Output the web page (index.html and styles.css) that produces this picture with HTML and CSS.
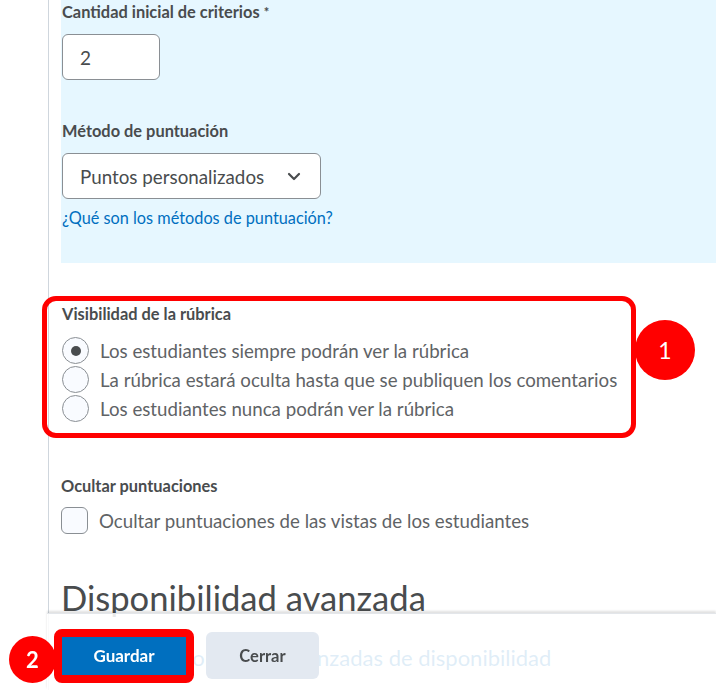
FILE: index.html
```html
<!DOCTYPE html>
<html lang="es">
<head>
    <meta charset="UTF-8">
    <meta name="viewport" content="width=device-width, initial-scale=1.0">
    <title>Nueva rúbrica</title>
    <link rel="stylesheet" href="styles.css">
</head>
<body>

    <div id="page">
        <div class="panel">
            <label class="field-label" for="criteria">Cantidad inicial de criterios <span class="req">*</span></label>
            <input type="text" id="criteria" class="num-input" value="2">

            <label class="field-label label-gap" for="scoring">Método de puntuación</label>
            <div class="select-box" id="scoring">
                <span>Puntos personalizados</span>
                <svg width="14" height="10" viewBox="0 0 14 10"><path d="M2 3 L7 8 L12 3" fill="none" stroke="#494c4e" stroke-width="2.2" stroke-linecap="round" stroke-linejoin="round"/></svg>
            </div>
            <a class="help-link" href="#">¿Qué son los métodos de puntuación?</a>
        </div>

        <div class="highlight">
            <div class="field-label">Visibilidad de la rúbrica</div>
            <div class="radio-list">
                <div class="radio-row"><span class="radio checked"></span>Los estudiantes siempre podrán ver la rúbrica</div>
                <div class="radio-row"><span class="radio"></span>La rúbrica estará oculta hasta que se publiquen los comentarios</div>
                <div class="radio-row"><span class="radio"></span>Los estudiantes nunca podrán ver la rúbrica</div>
            </div>
            <div class="step step-one">1</div>
        </div>

        <div class="field-label hide-label">Ocultar puntuaciones</div>
        <div class="check-row"><span class="checkbox"></span>Ocultar puntuaciones de las vistas de los estudiantes</div>

        <h1>Disponibilidad avanzada</h1>
        <a class="adv-link" href="#">Mostrar las opciones avanzadas de disponibilidad</a>
    </div>

    <div id="footer">
        <div class="save-ring">
            <button class="btn-primary">Guardar</button>
            <div class="step step-two">2</div>
        </div>
        <button class="btn-secondary">Cerrar</button>
    </div>

</body>
</html>
```

FILE: styles.css
```css
body {
    font-family: Lato, "Open Sans", sans-serif;
    background-color: #fff;
    margin: 0;
    color: #5f6366;
    height: 690px;
    overflow: hidden;
}
#page {
    margin-left: 48px;
    border-left: 1px solid #cfd6dd;
    padding-left: 12px;
    height: 690px;
    box-sizing: border-box;
}
.panel {
    background-color: #e6f7ff;
    padding: 1px 0 0 1px;
    height: 263px;
    box-sizing: border-box;
}
.field-label {
    display: block;
    font-size: 16.4px;
    font-weight: bold;
    color: #494c4e;
    line-height: 22px;
}
.req {
    font-size: 13px;
    vertical-align: top;
}
.label-gap {
    margin-top: 40px;
}
.num-input {
    display: block;
    margin-top: 11px;
    width: 98px;
    height: 46px;
    box-sizing: border-box;
    border: 1px solid #8a8f94;
    border-radius: 6px;
    padding: 0 17px;
    font-family: inherit;
    font-size: 19px;
    color: #494c4e;
    background-color: #fff;
}
.select-box {
    margin-top: 11px;
    width: 259px;
    height: 46px;
    box-sizing: border-box;
    border: 1px solid #8a8f94;
    border-radius: 6px;
    background-color: #fff;
    display: flex;
    align-items: center;
    justify-content: space-between;
    padding: 0 19px 0 17px;
    font-size: 18.8px;
    color: #494c4e;
}
.help-link {
    display: block;
    margin-top: 8px;
    font-size: 16.3px;
    color: #006fbf;
    text-decoration: none;
    line-height: 22px;
}
.highlight {
    position: relative;
    margin: 33px 0 0 -19px;
    width: 594px;
    height: 142px;
    box-sizing: border-box;
    border: 5px solid #ff0000;
    border-radius: 14px;
    padding: 2px 0 0 15px;
}
.radio-list {
    margin-top: 12px;
    display: flex;
    flex-direction: column;
    gap: 2px;
}
.radio-row, .check-row {
    display: flex;
    align-items: center;
    gap: 11px;
    font-size: 18.7px;
    height: 27px;
}
.radio {
    width: 25px;
    height: 25px;
    border: 1.5px solid #8a8f94;
    border-radius: 50%;
    background-color: #f9fbff;
    display: flex;
    align-items: center;
    justify-content: center;
    flex-shrink: 0;
}
.radio.checked::after {
    content: "";
    width: 10px;
    height: 10px;
    border-radius: 50%;
    background-color: #494c4e;
}
.step {
    position: absolute;
    width: 60px;
    height: 60px;
    border-radius: 50%;
    background-color: #ff0000;
    color: #fff;
    font-size: 23px;
    display: flex;
    align-items: center;
    justify-content: center;
}
.step-one {
    right: -64px;
    top: 19px;
}
.hide-label {
    margin-top: 37px;
}
.check-row {
    margin-top: 10px;
}
.checkbox {
    width: 25px;
    height: 25px;
    border: 1.5px solid #8a8f94;
    border-radius: 6px;
    background-color: #f9fbff;
    flex-shrink: 0;
}
h1 {
    margin: 43px 0 0;
    font-size: 34.6px;
    font-weight: normal;
    color: #494c4e;
    line-height: 42px;
}
.adv-link {
    display: block;
    margin: 24px 0 0 18px;
    font-size: 22px;
    line-height: 30px;
    color: #006fbf;
    text-decoration: none;
    white-space: nowrap;
}
#footer {
    position: fixed;
    left: 47px;
    right: 0;
    top: 613px;
    bottom: 0;
    background-color: rgba(255, 255, 255, 0.88);
    box-shadow: 0 -2px 2px rgba(0, 0, 0, 0.12);
    border-top: 1px solid #e3e6ea;
    display: flex;
    align-items: center;
    gap: 12px;
    padding: 7px 0 0 7px;
}
.save-ring {
    position: relative;
    border: 8px solid #ff0000;
    border-radius: 8px;
    display: flex;
}
.btn-primary {
    width: 124px;
    height: 38px;
    border: none;
    background-color: #006fbf;
    color: #fff;
    font-family: inherit;
    font-size: 17px;
    font-weight: bold;
}
.btn-secondary {
    width: 113px;
    height: 47px;
    border: none;
    border-radius: 6px;
    background-color: #e3e9f1;
    color: #494c4e;
    font-family: inherit;
    font-size: 16.5px;
    font-weight: bold;
}
.step-two {
    width: 47px;
    height: 47px;
    left: -53px;
    top: -1px;
    font-size: 22px;
    font-weight: bold;
}
```
